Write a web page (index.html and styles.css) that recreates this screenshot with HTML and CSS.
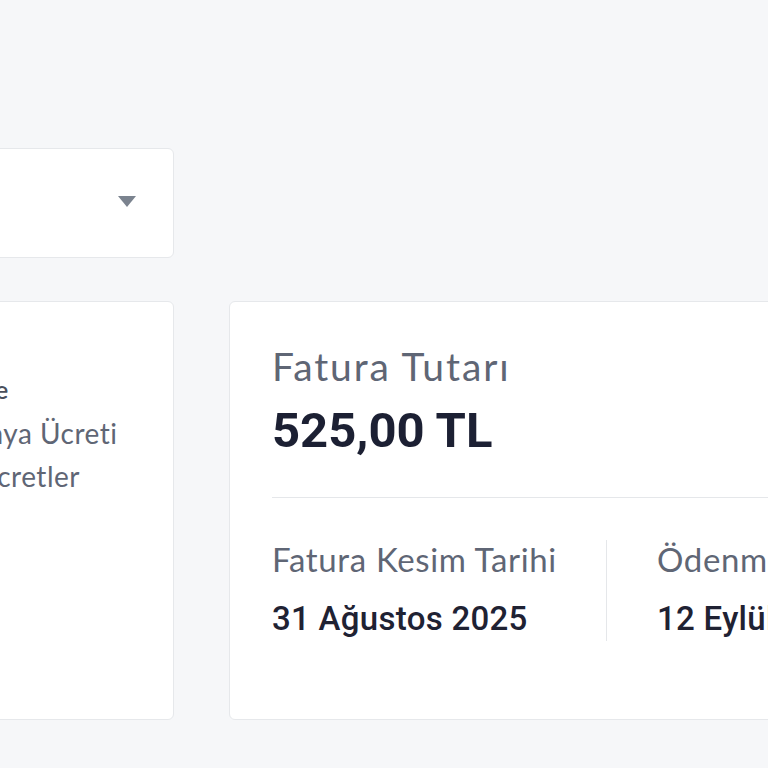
FILE: index.html
```html
<!DOCTYPE html>
<html lang="tr">

<head>
    <meta charset="UTF-8">
    <meta name="viewport" content="width=device-width, initial-scale=1.0">
    <title>Fatura Detayı</title>
    <link rel="stylesheet" href="styles.css">
</head>

<body>
    <div class="page">
        <!-- Period select -->
        <div class="select-box">
            <span class="select-value">Ağustos 2025</span>
            <span class="select-arrow"></span>
        </div>
        <div></div>

        <!-- Bill items -->
        <div class="card items-card">
            <ul class="items">
                <li class="items-title">Ana Tarife</li>
                <li>Kampanya Ücreti</li>
                <li>Diğer Ücretler</li>
            </ul>
        </div>

        <!-- Bill summary -->
        <div class="card summary-card">
            <div class="summary-head">
                <div class="label-big">Fatura Tutarı</div>
                <div class="amount">525,00 TL</div>
            </div>
            <div class="dates">
                <div class="date-col">
                    <div class="label">Fatura Kesim Tarihi</div>
                    <div class="value">31 Ağustos 2025</div>
                </div>
                <div class="date-col">
                    <div class="label">Ödenmesi Gereken Tarih</div>
                    <div class="value">12 Eylül 2025</div>
                </div>
            </div>
        </div>
    </div>
</body>

</html>
```

FILE: styles.css
```css
/* General styling */
body {
    margin: 0;
    padding: 0;
    background-color: #f6f7f9;
    font-family: 'Lato', 'Noto Sans', sans-serif;
    color: #5f6675;
    overflow: hidden;
}

/* Page grid */
.page {
    display: grid;
    grid-template-columns: 317px 700px;
    column-gap: 55px;
    row-gap: 43px;
    padding-top: 148px;
    margin-left: -143px;
}

/* Card components */
.card {
    background-color: #fff;
    border: 1px solid #e6e8eb;
    border-radius: 6px;
    box-sizing: border-box;
    height: 419px;
}

/* Select box */
.select-box {
    background-color: #fff;
    border: 1px solid #e6e8eb;
    border-radius: 6px;
    box-sizing: border-box;
    height: 110px;
    display: flex;
    align-items: center;
    justify-content: space-between;
    padding: 0 37px 0 42px;
}

.select-value {
    font-size: 28px;
    color: #1f2233;
    visibility: hidden;
}

.select-arrow {
    width: 0;
    height: 0;
    margin-bottom: 4px;
    border-left: 9px solid transparent;
    border-right: 9px solid transparent;
    border-top: 11px solid #7b838f;
}

/* Items list */
.items-card {
    padding: 71px 42px 0;
}

.items {
    list-style: none;
    margin: 0;
    padding: 0;
    display: flex;
    flex-direction: column;
    gap: 10px;
}

.items li {
    font-size: 28px;
    line-height: 33.6px;
    letter-spacing: 0.5px;
    white-space: nowrap;
}

.items .items-title {
    color: #4a4f5c;
    font-size: 25px;
    font-weight: 600;
    letter-spacing: -0.3px;
}

/* Summary */
.summary-card {
    padding: 41px 0 0 42px;
}

.summary-head {
    padding-bottom: 36px;
    border-bottom: 1px solid #e5e7ea;
}

.label-big {
    font-size: 39px;
    line-height: 1.2;
    letter-spacing: 1.9px;
    margin-bottom: 11px;
}

.amount {
    font-family: 'Roboto', 'Liberation Sans', sans-serif;
    font-size: 49px;
    font-weight: 700;
    line-height: 60px;
    color: #1c2033;
}

.dates {
    display: grid;
    grid-template-columns: 335px 1fr;
    margin-top: 42px;
}

.date-col {
    padding-bottom: 2px;
}

.date-col:first-child {
    border-right: 1px solid #e5e7ea;
}

.date-col + .date-col {
    padding-left: 50px;
}

.label {
    font-size: 33px;
    line-height: 1.2;
    letter-spacing: 0.65px;
    margin-bottom: 20px;
    white-space: nowrap;
}

.value {
    font-family: 'Roboto', 'Liberation Sans', sans-serif;
    font-size: 33px;
    font-weight: 500;
    line-height: 1.2;
    letter-spacing: 0.3px;
    color: #1f2233;
    white-space: nowrap;
}
```
